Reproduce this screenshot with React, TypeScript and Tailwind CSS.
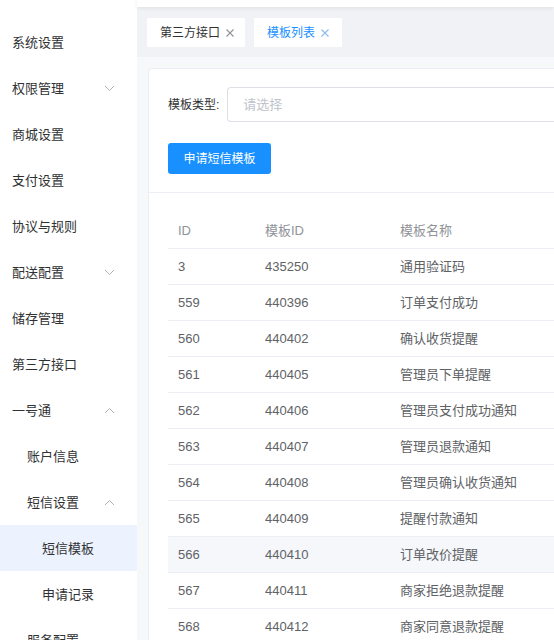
import React from "react";

const font = { fontFamily: '"Liberation Sans", "Noto Sans CJK SC", sans-serif' };

function Chevron({ up }: { up?: boolean }) {
  return (
    <svg width="11" height="7" viewBox="0 0 11 7" className="text-[#b0b3b8]">
      {up ? (
        <path d="M1 6 L5.5 1.5 L10 6" fill="none" stroke="currentColor" strokeWidth="1" />
      ) : (
        <path d="M1 1 L5.5 5.5 L10 1" fill="none" stroke="currentColor" strokeWidth="1" />
      )}
    </svg>
  );
}

function Close({ color }: { color: string }) {
  return (
    <svg width="8" height="8" viewBox="0 0 8 8" style={{ color }}>
      <path d="M0.5 0.5 L7.5 7.5 M7.5 0.5 L0.5 7.5" fill="none" stroke="currentColor" strokeWidth="1.1" />
    </svg>
  );
}

type Item = { label: string; indent: number; chev?: "up" | "down"; active?: boolean };

const items: Item[] = [
  { label: "系统设置", indent: 12 },
  { label: "权限管理", indent: 12, chev: "down" },
  { label: "商城设置", indent: 12 },
  { label: "支付设置", indent: 12 },
  { label: "协议与规则", indent: 12 },
  { label: "配送配置", indent: 12, chev: "down" },
  { label: "储存管理", indent: 12 },
  { label: "第三方接口", indent: 12 },
  { label: "一号通", indent: 12, chev: "up" },
  { label: "账户信息", indent: 27 },
  { label: "短信设置", indent: 27, chev: "up" },
  { label: "短信模板", indent: 42, active: true },
  { label: "申请记录", indent: 42 },
  { label: "服务配置", indent: 27 },
];

const rows = [
  ["3", "435250", "通用验证码"],
  ["559", "440396", "订单支付成功"],
  ["560", "440402", "确认收货提醒"],
  ["561", "440405", "管理员下单提醒"],
  ["562", "440406", "管理员支付成功通知"],
  ["563", "440407", "管理员退款通知"],
  ["564", "440408", "管理员确认收货通知"],
  ["565", "440409", "提醒付款通知"],
  ["566", "440410", "订单改价提醒"],
  ["567", "440411", "商家拒绝退款提醒"],
  ["568", "440412", "商家同意退款提醒"],
];

export default function App() {
  return (
    <div className="flex h-[640px] w-[554px] overflow-hidden bg-[#f0f2f5]" style={font}>
      <aside className="w-[137px] shrink-0 bg-white pt-[19px]">
        {items.map((it) => (
          <div
            key={it.label}
            className={`flex h-[46px] items-center justify-between pr-[22px] pt-[1px] text-[13px] text-[#303133] ${it.active ? "bg-[#ecf3fe]" : ""}`}
            style={{ paddingLeft: it.indent }}
          >
            <span>{it.label}</span>
            {it.chev && <Chevron up={it.chev === "up"} />}
          </div>
        ))}
      </aside>
      <main className="flex min-w-0 flex-1 flex-col">
        <div className="h-[7px] shrink-0 bg-white shadow-[0_1px_4px_rgba(0,21,41,0.08)]" />
        <div className="flex h-[50px] shrink-0 items-start gap-[9px] pl-[10px] pt-[11px]">
          <div className="flex h-[29px] w-[98px] items-center gap-[6px] bg-white pl-[13px] pt-[1px] text-[12px] text-[#303133]">
            <span>第三方接口</span>
            <Close color="#909399" />
          </div>
          <div className="flex h-[29px] w-[88px] items-center gap-[6px] bg-white pl-[13px] pt-[1px] text-[12px] text-[#1890ff]">
            <span>模板列表</span>
            <Close color="#8fb8f0" />
          </div>
        </div>
        <div className="flex-1 bg-[#f7f8fa] pl-[11px] pt-[11px]">
          <div className="h-full rounded-tl-[4px] border border-r-0 border-[#ebeef5] bg-white">
            <div className="border-b border-[#ebeef5] pb-[18px] pl-[19px] pt-[18px]">
              <div className="flex items-center">
                <span className="text-[12px] text-[#303133]">模板类型:</span>
                <div className="ml-[8px] flex h-[35px] flex-1 items-center rounded-l-[4px] border border-r-0 border-[#dcdfe6] pl-[15px] text-[13px] text-[#c0c4cc]">
                  请选择
                </div>
              </div>
              <button className="mt-[21px] flex h-[31px] w-[103px] items-center justify-center rounded-[3px] bg-[#1890ff] text-[12px] text-white">
                申请短信模板
              </button>
            </div>
            <div className="pl-[19px] pt-[20px]">
              <div className="flex h-[36px] items-center border-b border-[#ebeef5] pt-[1px] text-[13px] text-[#909399]">
                <span className="w-[87px] pl-[10px]">ID</span>
                <span className="w-[135px] pl-[10px]">模板ID</span>
                <span className="pl-[10px]">模板名称</span>
              </div>
              {rows.map((r) => (
                <div
                  key={r[0]}
                  className={`flex h-[36px] items-center border-b border-[#ebeef5] pt-[1px] text-[13px] text-[#606266] ${r[0] === "566" ? "bg-[#f5f7fa]" : ""}`}
                >
                  <span className="w-[87px] pl-[10px]">{r[0]}</span>
                  <span className="w-[135px] pl-[10px]">{r[1]}</span>
                  <span className="pl-[10px]">{r[2]}</span>
                </div>
              ))}
            </div>
          </div>
        </div>
      </main>
    </div>
  );
}
